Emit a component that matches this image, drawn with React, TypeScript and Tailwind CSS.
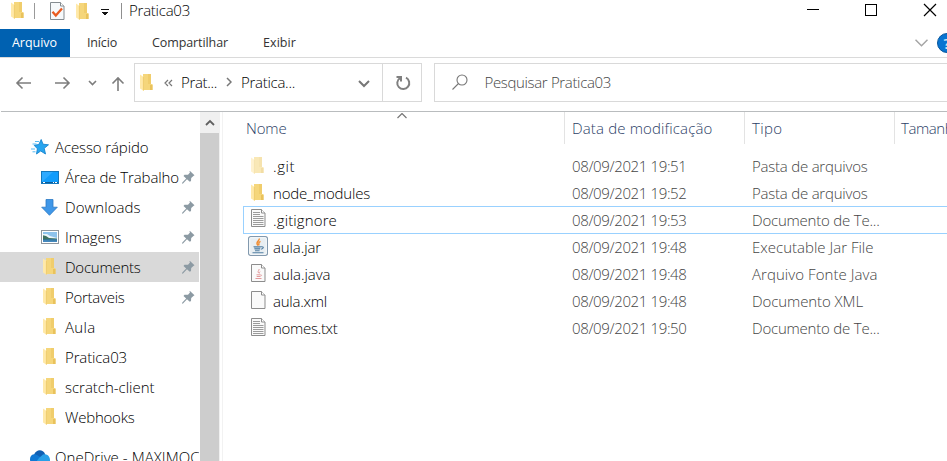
import { useLayoutEffect, useRef, useState } from "react";
import type { ReactNode } from "react";

/** Single line of text whose tracking is adjusted so that it spans `w` pixels. */
function Label({ children, w, className = "" }: { children: string; w: number; className?: string }) {
  const ref = useRef<HTMLSpanElement>(null);
  const [spacing, setSpacing] = useState(0);
  useLayoutEffect(() => {
    const el = ref.current;
    if (!el) return;
    el.style.letterSpacing = "0px";
    const natural = el.getBoundingClientRect().width;
    const next = (w - natural) / children.length;
    el.style.letterSpacing = `${next}px`;
    setSpacing(next);
  }, [children, w]);
  return (
    <span ref={ref} className={`inline-block shrink-0 whitespace-pre ${className}`} style={{ letterSpacing: spacing }}>
      {children}
    </span>
  );
}

function Folder({ className = "" }: { className?: string }) {
  return (
    <svg width="13" height="18" viewBox="0 0 13 18" className={`shrink-0 ${className}`}>
      <path d="M3 0h8v10h1.5v6H3z" fill="#f5d67b" />
      <path d="M8 0h3v10H8z" fill="#f0cd6c" />
      <path d="M10 11h2.5v5H10z" fill="#e9c25c" />
      <path d="M0 .5 4 3.2V17L0 14.5z" fill="#ffe9a9" />
      <path d="M3.4 3v13.5" stroke="#eecb6c" />
    </svg>
  );
}

function Pin() {
  return (
    <svg width="13" height="13" viewBox="0 0 13 13" fill="#8c9aa3" className="shrink-0">
      <path d="M8 0 12.5 4.2 11.4 5 9.2 7 9 10 7.8 10.8 5 8.2 1 12.5 0 12.7.3 11.6 4.2 7.5 1.5 5 2.5 3.8 6 3.8 8 1.6 7.4.6z" />
    </svg>
  );
}

function Star() {
  return (
    <svg width="18" height="16" viewBox="0 0 18 16" className="shrink-0">
      <path d="M10.2.5 12 5.2l5.5.6-4.3 3.5 1.3 5.7-4.8-3-4.2 3 .9-5.2-3.2-3.5 4.6-.8z" fill="#27a5ef" stroke="#1785ce" strokeWidth=".9" />
      <path d="M4 2.5h4M1.5 5h4M0 10h4M1.5 12.8h3" stroke="#56b9f3" />
    </svg>
  );
}

function Desktop() {
  return (
    <svg width="18" height="13" viewBox="0 0 18 13">
      <rect x=".5" y=".5" width="17" height="12" fill="#119cfb" stroke="#1478bd" />
      <path d="M1 11V1h11z" fill="#2eaaff" />
      <path d="M1 11.5h16" stroke="#0c5b96" />
      <path d="M2 11.5h2M12 11.5h1M14 11.5h2" stroke="#fff" />
    </svg>
  );
}

function Download() {
  return (
    <svg width="17" height="17" viewBox="0 0 17 17">
      <path d="M5 .5h7v7.7h4.3L8.5 16.3.7 8.2H5z" fill="#3f97e8" stroke="#2b78c4" strokeWidth=".8" />
    </svg>
  );
}

function Picture() {
  return (
    <svg width="18" height="14" viewBox="0 0 18 14">
      <rect x=".5" y=".5" width="17" height="13" fill="#fff" stroke="#8f969d" />
      <path d="M2 2h14v10H2z" fill="#8ec3ec" />
      <path d="M2 4h4l3 2 7 2v1H2z" fill="#eaf4fa" />
      <path d="M2 5.2 5 6l3 2 8 .5v1H2z" fill="#3f7261" />
      <path d="M2 9h14v3H2z" fill="#4488bd" />
      <path d="M2 9.5 16 10" stroke="#30718c" />
    </svg>
  );
}

function Cloud() {
  return (
    <svg width="20" height="15" viewBox="0 0 20 15" className="shrink-0">
      <path d="M4 5C6-1 13-1 15 4l1 3-7 1z" fill="#0f5fb3" />
      <path d="M0 9c0-4 4-6 7-4l8 5-9 5H4C1 15 0 12 0 9z" fill="#0f78d4" />
      <path d="m9 8 4-3.5c4-1.5 7 2 7 5.5 0 3-2 5-4 5H4z" fill="#28a0e8" />
    </svg>
  );
}

type DocKind = "text" | "java" | "blank";

function Doc({ kind }: { kind: DocKind }) {
  return (
    <svg width="15" height="18" viewBox="0 0 15 18">
      <path d="M.5.5h10l3.5 3.5v13.5H.5z" fill="#fafafa" stroke="#8d8d8d" />
      <path d="M10.5.5v3.5H14" fill="#fff" stroke="#8d8d8d" />
      {kind === "text" && <path d="M2 3.5h7M2 5.5h7M2 7.5h10.5M2 9.5h10.5M2 11.5h10.5M2 13.5h10.5M2 15.5h10.5" stroke="#9b9b9b" />}
      {kind === "java" && (
        <g fill="none" stroke="#e39a9c">
          <path d="M8 5c.8 1.5-2 2-.5 4M9.3 7.5C7.8 8.3 9 8.5 8.3 9.5" />
          <path d="M5.5 10.8h4M5.7 12.5h3.5M4.5 14.5h6M9.8 10.8c1.2 0 .8 1.2-.5 1.4" />
        </g>
      )}
    </svg>
  );
}

function Jar() {
  return (
    <svg width="20" height="20" viewBox="0 0 20 20">
      <rect x=".6" y=".6" width="18.8" height="18.8" rx="2" fill="#e8eef2" stroke="#8299ae" strokeWidth="1.2" />
      <rect x="1.7" y="1.7" width="16.6" height="16.6" rx="1" fill="none" stroke="#f9fcfd" />
      <path d="M11.2 2.5c.8 2.5-4.5 3.2-1.3 7M12.5 5.4C9 7 12 7.5 10.5 9.5" fill="none" stroke="#f18c31" strokeWidth="1.4" />
      <path d="M6 11.3h6.5v1.2H6z" fill="#8fabc2" />
      <path d="M5.5 10.8h8M6.5 12.9h5.5M7 14.8h4.6M4.5 16.7h11M13.3 10.8c3-.4 2.5 2-.5 2.4" fill="none" stroke="#527fa3" strokeWidth="1.1" />
    </svg>
  );
}

type Place = { name: string; w: number; icon: ReactNode; pinned?: boolean; selected?: boolean };

const places: Place[] = [
  { name: "Área de Trabalho", w: 114, icon: <Desktop />, pinned: true },
  { name: "Downloads", w: 75.5, icon: <Download />, pinned: true },
  { name: "Imagens", w: 56.5, icon: <Picture />, pinned: true },
  { name: "Documents", w: 75.5, icon: <Folder className="ml-0.5" />, pinned: true, selected: true },
  { name: "Portaveis", w: 59.5, icon: <Folder className="ml-0.5" />, pinned: true },
  { name: "Aula", w: 30.5, icon: <Folder className="ml-0.5" /> },
  { name: "Pratica03", w: 62, icon: <Folder className="ml-0.5" /> },
  { name: "scratch-client", w: 89.5, icon: <Folder className="ml-0.5" /> },
  { name: "Webhooks", w: 69.5, icon: <Folder className="ml-0.5" /> },
];

type FileRow = { name: string; w: number; time: string; type: string; tw: number; icon: ReactNode; focused?: boolean };

const files: FileRow[] = [
  { name: ".git", w: 22, time: "19:51", type: "Pasta de arquivos", tw: 115.5, icon: <Folder className="ml-[3px] mb-0.5 opacity-55" /> },
  { name: "node_modules", w: 97, time: "19:52", type: "Pasta de arquivos", tw: 115.5, icon: <Folder className="ml-[3px] mb-0.5" /> },
  { name: ".gitignore", w: 64, time: "19:53", type: "Documento de Te...", tw: 127.5, icon: <span className="ml-[3px] mb-1"><Doc kind="text" /></span>, focused: true },
  { name: "aula.jar", w: 48, time: "19:48", type: "Executable Jar File", tw: 121.5, icon: <span className="mb-1"><Jar /></span> },
  { name: "aula.java", w: 57.5, time: "19:48", type: "Arquivo Fonte Java", tw: 125.5, icon: <span className="ml-[3px] mb-1"><Doc kind="java" /></span> },
  { name: "aula.xml", w: 54, time: "19:48", type: "Documento XML", tw: 111, icon: <span className="ml-[3px] mb-1"><Doc kind="blank" /></span> },
  { name: "nomes.txt", w: 64.5, time: "19:50", type: "Documento de Te...", tw: 127.5, icon: <span className="ml-[3px] mb-1"><Doc kind="text" /></span> },
];

function TitleBar() {
  return (
    <header className="flex h-[29px] shrink-0 items-start">
      <Folder className="ml-[11px] mt-[2px]" />
      <span className="ml-[10px] mt-[3px] h-4 w-px bg-[#9a9a9a]" />
      <svg width="15" height="18" viewBox="0 0 15 18" className="ml-[15px] mt-[2px]">
        <path d="M.5.5h10l3.5 3.5v13.5H.5z" fill="#f6f9fb" stroke="#858c91" />
        <path d="M10.5.5v3.5H14" fill="#fff" stroke="#858c91" />
        <path d="m2.5 9.8 3.3 3.7 6.2-7" fill="none" stroke="#e95b20" strokeWidth="2.3" />
      </svg>
      <Folder className="ml-[11px] mt-[3px]" />
      <svg width="8" height="7" viewBox="0 0 8 7" className="ml-[12px] mt-[9px]" shapeRendering="crispEdges">
        <path d="M0 0h8v1H0zM1 3h6v1H1zM2 4h4v1H2zM3 5h2v1H3z" fill="#111" />
      </svg>
      <span className="ml-[12px] mt-[3px] h-4 w-px bg-[#8f8f8f]" />
      <Label w={61} className="ml-[7px] text-[15px] leading-[21px]">Pratica03</Label>
      <svg width="132" height="14" viewBox="0 0 132 14" className="ml-auto mr-[9px] mt-[3px]" fill="none" stroke="#000" shapeRendering="crispEdges">
        <path d="M1 6.5h12M59.5 1.5h11v11h-11z" />
        <path d="M118 1 130 13M130 1 118 13" shapeRendering="auto" strokeWidth="1.2" />
      </svg>
    </header>
  );
}

function Ribbon() {
  return (
    <nav className="flex h-[29px] shrink-0 items-start border-b border-[#dadada] text-[12.5px] font-normal leading-[28px] text-[#333]">
      <div className="h-7 w-[70px] bg-[#0061b1] pl-3 text-white"><Label w={45}>Arquivo</Label></div>
      <Label w={30} className="ml-[17px]">Início</Label>
      <Label w={76} className="ml-[35px]">Compartilhar</Label>
      <Label w={33} className="ml-[35px]">Exibir</Label>
      <div className="ml-auto flex w-[32px] items-start overflow-hidden">
        <svg width="13" height="8" viewBox="0 0 13 8" className="mt-[10px] shrink-0" fill="none" stroke="#a5a5a5" strokeWidth="1.5"><path d="m.5.8 6 6 6-6" /></svg>
        <span className="ml-[9px] mt-1 h-5 w-5 shrink-0 rounded-full border border-[#07569c] bg-[#0874d1] text-center text-[15px] font-semibold leading-[19px] text-[#c8e4fb]">?</span>
      </div>
    </nav>
  );
}

function AddressRow() {
  return (
    <div className="flex h-[53px] shrink-0 items-start pt-[5px] text-[15px]">
      <svg width="134" height="39" viewBox="0 0 134 39" className="shrink-0" fill="none" stroke="#7d7d7d" strokeWidth="1.6">
        <path d="M31 20H17M22.5 14.5 17 20l5.5 5.5M55 20h14M63.5 14.5 69 20l-5.5 5.5" />
        <path d="m89 18 3.5 3.5L96 18M118 28V15.5M112.5 20.5l5.5-5.5 5.5 5.5" />
      </svg>
      <div className="flex h-[39px] w-[288px] shrink-0 items-center border border-[#d9d9d9] bg-white text-black">
        <Folder className="ml-[5px]" />
        <svg width="9" height="8" viewBox="0 0 9 8" className="ml-[11px]" fill="none" stroke="#777" strokeWidth="1.2"><path d="M4 1 1 4l3 3M8 1 5 4l3 3" /></svg>
        <Label w={36} className="ml-[8px]">Prat...</Label>
        <svg width="6" height="10" viewBox="0 0 6 10" className="-mt-0.5 ml-[9px]" fill="none" stroke="#777" strokeWidth="1.5"><path d="m1 1 4 4-4 4" /></svg>
        <Label w={54} className="ml-[9px]">Pratica...</Label>
        <svg width="12" height="8" viewBox="0 0 12 8" className="ml-auto mr-[12px] mt-0.5" fill="none" stroke="#777" strokeWidth="2"><path d="m1 1 5 5 5-5" /></svg>
        <div className="flex h-full w-[39px] items-center justify-center border-l border-[#d9d9d9]">
          <svg width="16" height="16" viewBox="0 0 16 16" className="ml-0.5" fill="none" stroke="#808080" strokeWidth="2"><path d="M11 2.7A6 6 0 1 1 5 3M1.5 2H6v4.5" /></svg>
        </div>
      </div>
      <div className="ml-3 flex h-[39px] grow items-center border border-r-0 border-[#d9d9d9] text-[#444]">
        <svg width="16" height="17" viewBox="0 0 16 17" className="ml-[17px]" fill="none" stroke="#777" strokeWidth="1.1"><circle cx="10" cy="6" r="5" /><path d="M6.5 9.5.5 15.5" /></svg>
        <Label w={126.5} className="ml-[16.5px]">Pesquisar Pratica03</Label>
      </div>
    </div>
  );
}

function Sidebar() {
  return (
    <aside className="flex w-[223px] shrink-0 border-r border-[#f2f2f2] text-[15px]">
      <div className="w-[199px] shrink-0 overflow-hidden pt-5 leading-[30px]">
        <div className="flex h-[30px] items-center pl-[31px]"><Star /><Label w={93.5} className="ml-1.5">Acesso rápido</Label></div>
        {places.map((p) => (
          <div key={p.name} className={p.selected ? "flex h-[30px] items-center bg-[#d9d9d9] pl-[41px]" : "flex h-[30px] items-center pl-[41px]"}>
            <span className="w-6 shrink-0">{p.icon}</span>
            <Label w={p.w}>{p.name}</Label>
            {p.pinned && <span className="ml-auto mr-1 shrink-0"><Pin /></span>}
          </div>
        ))}
        <div className="mt-[10px] flex h-[30px] items-center pl-[30px]"><Cloud /><Label w={144.5} className="ml-[5px]">OneDrive - MAXIMOC</Label></div>
      </div>
      <div className="ml-px flex w-[20px] flex-col bg-[#f0f0f0]">
        <div className="flex h-[21px] items-center justify-center">
          <svg width="10" height="7" viewBox="0 0 10 7" fill="none" stroke="#606060" strokeWidth="1.8"><path d="m1 6 4-4 4 4" /></svg>
        </div>
        <div className="mr-px grow bg-[#cdcdcd]" />
      </div>
    </aside>
  );
}

function FileList() {
  return (
    <main className="min-w-0 grow overflow-hidden text-[15px]">
      <div className="flex h-[41px] items-start text-[#2c4066]">
        <div className="relative h-8 w-[342px] shrink-0 border-r border-[#e3e3e3] pl-[23px] leading-[33px]">
          <Label w={40.5}>Nome</Label>
          <svg width="10" height="6" viewBox="0 0 10 6" className="absolute left-[174px] top-px" fill="none" stroke="#777" strokeWidth="1.2"><path d="m.5 5 4.5-4.5L9.5 5" /></svg>
        </div>
        <div className="h-8 w-[180px] shrink-0 border-r border-[#e3e3e3] pl-[7px] leading-[33px]"><Label w={140.5}>Data de modificação</Label></div>
        <div className="h-8 w-[150px] shrink-0 border-r border-[#e3e3e3] pl-[7px] leading-[33px]"><Label w={30.5}>Tipo</Label></div>
        <div className="h-8 shrink-0 pl-[6px] leading-[33px]"><Label w={60.5}>Tamanho</Label></div>
      </div>
      {files.map((f) => (
        <div key={f.name} className={f.focused ? "-mt-px ml-5 flex h-[28px] items-center border border-r-0 border-[#99d1ff] pl-1" : "ml-[25px] flex h-[27px] items-center"}>
          <span className="flex w-[25px] shrink-0 items-center">{f.icon}</span>
          <div className="w-[299px] shrink-0"><Label w={f.w}>{f.name}</Label></div>
          <div className="w-[180px] shrink-0 text-[#444]"><Label w={114.5}>{`08/09/2021 ${f.time}`}</Label></div>
          <Label w={f.tw} className="text-[#444]">{f.type}</Label>
        </div>
      ))}
    </main>
  );
}

export default function App() {
  return (
    <div className="flex h-[461px] w-[947px] flex-col overflow-hidden bg-white font-['Open_Sans','Noto_Sans',sans-serif] font-[350] text-black antialiased">
      <TitleBar />
      <Ribbon />
      <AddressRow />
      <div className="ml-px h-px shrink-0 bg-[#b9bcbe]" />
      <div className="flex min-h-0 grow"><Sidebar /><FileList /></div>
    </div>
  );
}
